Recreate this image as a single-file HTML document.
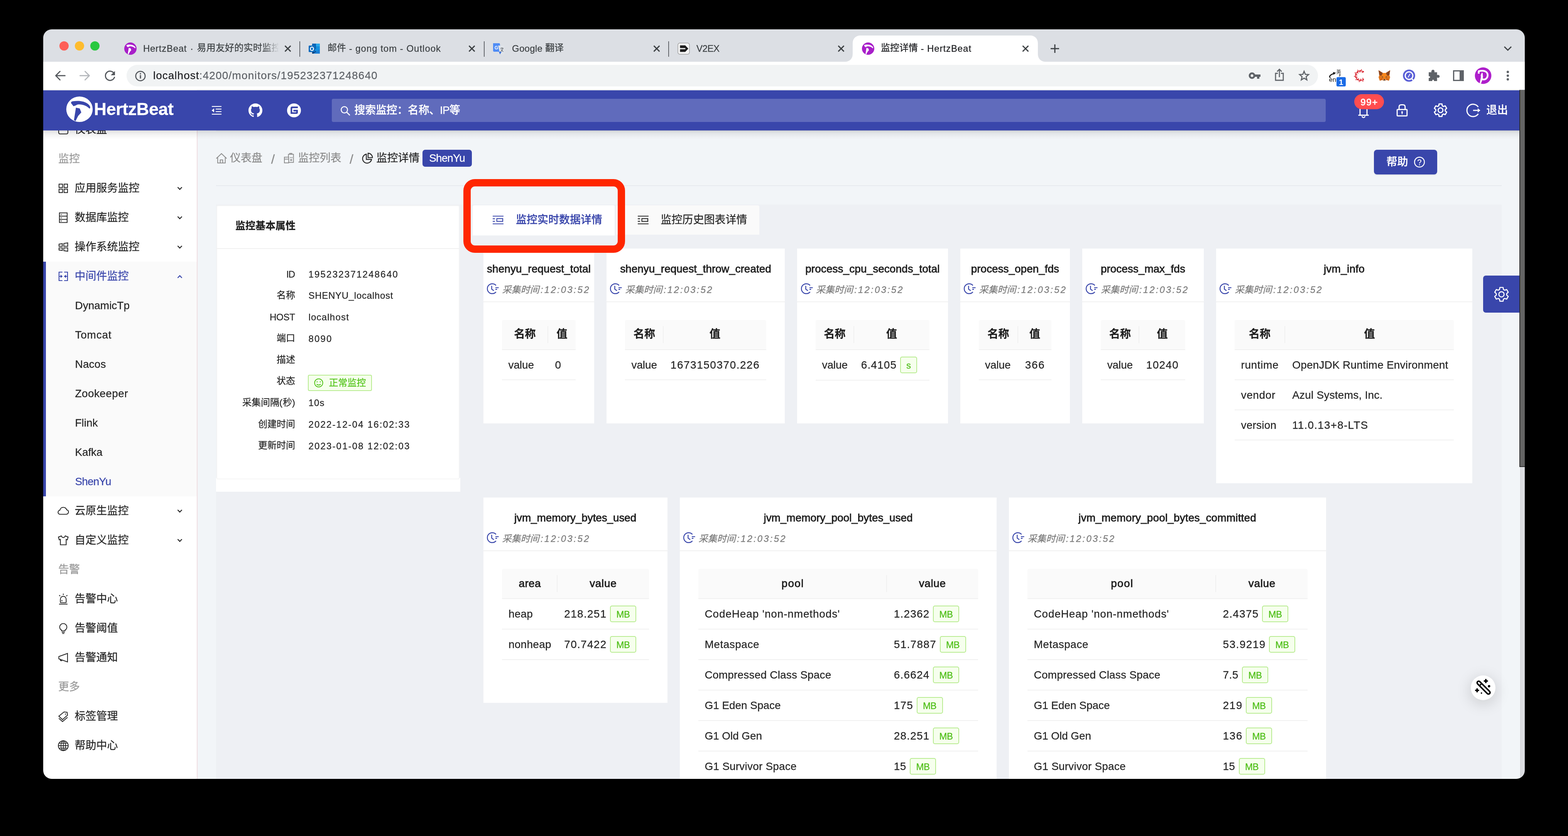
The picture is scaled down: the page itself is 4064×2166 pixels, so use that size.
<!DOCTYPE html>
<html lang="zh"><head><meta charset="utf-8"><title>监控详情 - HertzBeat</title><style>
*{box-sizing:border-box}
html,body{margin:0;padding:0}
html{width:4064px;height:2166px;overflow:hidden;background:#000}
body{width:4064px;height:2166px;background:#000;position:relative;overflow:hidden;font-family:"Liberation Sans","Noto Sans CJK SC",sans-serif}
#win{position:absolute;left:0;top:0;width:4064px;height:2166px;clip-path:inset(76px 112px 148px 112px round 22px);will-change:transform;overflow:hidden}
#win div,#win svg.ic{position:absolute}
.t{white-space:nowrap;-webkit-text-stroke:0.3px}
.t span{display:inline}
.t span.m{font-weight:500}
svg.ic{overflow:visible}
</style></head><body><div id="win"><div style="left:112.0px;top:76.0px;width:3840.0px;height:84.0px;background:#dcdfe4;"></div><div style="left:112.0px;top:160.0px;width:3840.0px;height:73.0px;background:#ffffff;"></div><div style="left:112.0px;top:231.5px;width:3840.0px;height:2.0px;background:#dcdde0;"></div><div style="left:154.0px;top:107.0px;width:24.0px;height:24.0px;background:#fe5f57;border-radius:50%;"></div><div style="left:194.0px;top:107.0px;width:24.0px;height:24.0px;background:#febc2e;border-radius:50%;"></div><div style="left:234.0px;top:107.0px;width:24.0px;height:24.0px;background:#28c840;border-radius:50%;"></div><svg class="ic" style="left:2190px;top:92px" width="520" height="68" viewBox="0 0 520 68"><path fill="#fff" d="M0 68 C12 68 20 60 20 48 V20 C20 8 28 0 40 0 H480 C492 0 500 8 500 20 V48 C500 60 508 68 520 68 Z"/></svg><div style="left:776.0px;top:107.0px;width:2.0px;height:40.0px;background:#5f6368;"></div><div style="left:1254.0px;top:107.0px;width:2.0px;height:40.0px;background:#5f6368;"></div><div style="left:1732.0px;top:107.0px;width:2.0px;height:40.0px;background:#5f6368;"></div><div class="t" style="top:102.0px;height:48px;line-height:48px;font-size:24px;color:#3c4043;left:371.0px;"><span style="letter-spacing:0.72px;margin-right:-0.72px">HertzBeat</span></div><div class="t" style="top:102.0px;height:48px;line-height:48px;font-size:24px;color:#3c4043;left:-3.0px;width:1000px;text-align:center;"><span>·</span></div><div class="t" style="top:102.0px;height:48px;line-height:48px;font-size:24px;color:#3c4043;left:510.5px;width:212px;overflow:hidden;-webkit-mask-image:linear-gradient(90deg,#000 170px,transparent 212px);"><span style="position:relative;top:-2px;letter-spacing:0.19px">易用友好的实时监控</span></div><div class="t" style="top:102.0px;height:48px;line-height:48px;font-size:24px;color:#3c4043;left:849.0px;"><span style="position:relative;top:-2px">邮件</span><span style="letter-spacing:0.98px;margin-right:-0.98px"> - gong tom - Outlook</span></div><div class="t" style="top:102.0px;height:48px;line-height:48px;font-size:24px;color:#3c4043;left:1327.0px;"><span style="letter-spacing:0.28px">Google </span><span style="position:relative;top:-2px">翻译</span></div><div class="t" style="top:102.0px;height:48px;line-height:48px;font-size:24px;color:#3c4043;left:1805.0px;"><span style="letter-spacing:-0.46px;margin-right:0.46px">V2EX</span></div><div class="t" style="top:102.0px;height:48px;line-height:48px;font-size:24px;color:#202124;left:2283.0px;"><span style="position:relative;top:-2px">监控详情</span><span style="letter-spacing:0.91px;margin-right:-0.91px"> - HertzBeat</span></div><svg class="ic" style="left:320.5px;top:108.5px;" width="34" height="34" viewBox="-17.0 -17.0 34 34"><g transform="scale(1.0)"><circle r="16" fill="#a81fc9"/><path fill="#fff" d="M-10.2 -7.6 C-10.4 -9.2 -9.4 -10 -7.6 -10.1 C-3 -10.6 1 -10.6 5 -9.4 C9 -8 12 -5.6 12.8 -3.4 C13.1 -2.6 13 -1.6 12.7 -1.1 L11.9 -0.9 C10.6 -2.4 9 -3.5 7.4 -4.3 C4.6 -5.6 1.6 -6.2 -1 -6.1 C-2.6 -6 -3.8 -5.4 -4.4 -4.8 L-7.2 -3.8 Z"/><path fill="#fff" d="M-4.3 -1.9 L0.3 -1 L2.2 4 L-1.6 8.4 L-4.8 14.9 L-6.7 13.6 Z"/></g></svg><svg class="ic" style="left:798.0px;top:109.5px;" width="34" height="32" viewBox="-17.0 -16.0 34 32"><rect x="-6" y="-13" width="20" height="22" rx="1.5" fill="#1490df"/><rect x="-6" y="-13" width="10" height="7" fill="#0364b8"/><rect x="4" y="-13" width="10" height="7" fill="#28a8ea"/><rect x="-6" y="-6" width="10" height="7" fill="#0a5ea8"/><rect x="4" y="-6" width="10" height="7" fill="#1490df"/><path fill="#0a3c78" d="M-6 1L14 13H-6Z"/><path fill="#1a7fd4" d="M14 1V13H-3Z"/><rect x="-15" y="-8" width="17" height="17" rx="1.8" fill="#0f6cbd"/><ellipse cx="-6.5" cy="0.5" rx="4" ry="4.6" fill="none" stroke="#fff" stroke-width="2.4"/></svg><svg class="ic" style="left:1276.0px;top:109.5px;" width="32" height="32" viewBox="-16.0 -16.0 32 32"><path fill="#4f8cf5" d="M-14 -14H3L8 8H-11C-13 8 -14 7 -14 5Z"/><path fill="#dfe3e8" d="M-1 -8H12C14 -8 15 -7 15 -5V12C15 14 14 15 12 15H4Z"/><path fill="#3a6fd8" d="M8 8L4 15L1 8Z"/><text x="-5.5" y="1.5" text-anchor="middle" font-family="Liberation Sans" font-weight="700" font-size="12" fill="#fff">G</text><path fill="none" stroke="#5f6368" stroke-width="1.3" d="M5 -1H13M9 -3V-1M11.5 -1C11 3 8 6 5.5 7.5M6.5 1.5C8 4.5 10 6.5 12.5 8"/></svg><svg class="ic" style="left:1755.0px;top:109.5px;" width="34" height="32" viewBox="-17.0 -16.0 34 32"><rect x="-15" y="-14.5" width="30" height="29" rx="5" fill="#f4f4f4" stroke="#9a9a9a" stroke-width="1.4"/><path fill="#1d1d1d" d="M-9.5 -8.5H4L12 0L4 8.5H-9.5V1.6H3.5L5 0L3.5 -1.6H-9.5Z"/></svg><svg class="ic" style="left:2233.0px;top:108.5px;" width="34" height="34" viewBox="-17.0 -17.0 34 34"><g transform="scale(1.0)"><circle r="16" fill="#a81fc9"/><path fill="#fff" d="M-10.2 -7.6 C-10.4 -9.2 -9.4 -10 -7.6 -10.1 C-3 -10.6 1 -10.6 5 -9.4 C9 -8 12 -5.6 12.8 -3.4 C13.1 -2.6 13 -1.6 12.7 -1.1 L11.9 -0.9 C10.6 -2.4 9 -3.5 7.4 -4.3 C4.6 -5.6 1.6 -6.2 -1 -6.1 C-2.6 -6 -3.8 -5.4 -4.4 -4.8 L-7.2 -3.8 Z"/><path fill="#fff" d="M-4.3 -1.9 L0.3 -1 L2.2 4 L-1.6 8.4 L-4.8 14.9 L-6.7 13.6 Z"/></g></svg><svg class="ic" style="left:734.0px;top:114.0px;" width="24" height="24" viewBox="-12.0 -12.0 24 24"><path fill="none" stroke="#3c4043" stroke-width="3" stroke-linecap="butt" stroke-linejoin="miter" d="M-7.4 -7.4L7.4 7.4M7.4 -7.4L-7.4 7.4"/></svg><svg class="ic" style="left:1211.0px;top:114.0px;" width="24" height="24" viewBox="-12.0 -12.0 24 24"><path fill="none" stroke="#3c4043" stroke-width="3" stroke-linecap="butt" stroke-linejoin="miter" d="M-7.4 -7.4L7.4 7.4M7.4 -7.4L-7.4 7.4"/></svg><svg class="ic" style="left:1689.5px;top:114.0px;" width="24" height="24" viewBox="-12.0 -12.0 24 24"><path fill="none" stroke="#3c4043" stroke-width="3" stroke-linecap="butt" stroke-linejoin="miter" d="M-7.4 -7.4L7.4 7.4M7.4 -7.4L-7.4 7.4"/></svg><svg class="ic" style="left:2168.0px;top:114.0px;" width="24" height="24" viewBox="-12.0 -12.0 24 24"><path fill="none" stroke="#3c4043" stroke-width="3" stroke-linecap="butt" stroke-linejoin="miter" d="M-7.4 -7.4L7.4 7.4M7.4 -7.4L-7.4 7.4"/></svg><svg class="ic" style="left:2645.5px;top:114.0px;" width="24" height="24" viewBox="-12.0 -12.0 24 24"><path fill="none" stroke="#3c4043" stroke-width="3" stroke-linecap="butt" stroke-linejoin="miter" d="M-7.4 -7.4L7.4 7.4M7.4 -7.4L-7.4 7.4"/></svg><svg class="ic" style="left:2719.0px;top:111.0px;" width="30" height="30" viewBox="-15.0 -15.0 30 30"><path fill="none" stroke="#3c4043" stroke-width="3" stroke-linecap="butt" stroke-linejoin="miter" d="M-11 0H11M0 -11V11"/></svg><svg class="ic" style="left:3892.5px;top:116.0px;" width="30" height="20" viewBox="-15.0 -10.0 30 20"><path fill="none" stroke="#3c4043" stroke-width="3" stroke-linecap="butt" stroke-linejoin="miter" d="M-9 -5L0 4L9 -5"/></svg><svg class="ic" style="left:139.0px;top:179.0px;" width="34" height="34" viewBox="-17.0 -17.0 34 34"><path fill="none" stroke="#54585d" stroke-width="3" stroke-linecap="round" stroke-linejoin="round" d="M12.5 0H-11.5M-0.5 -11L-11.5 0L-0.5 11"/></svg><svg class="ic" style="left:203.0px;top:179.0px;" width="34" height="34" viewBox="-17.0 -17.0 34 34"><path fill="none" stroke="#b4b7bb" stroke-width="3" stroke-linecap="round" stroke-linejoin="round" d="M-12.5 0H11.5M0.5 -11L11.5 0L0.5 11"/></svg><svg class="ic" style="left:266.5px;top:179.0px;" width="36" height="36" viewBox="-18.0 -18.0 36 36"><path fill="none" stroke="#54585d" stroke-width="3" stroke-linecap="butt" stroke-linejoin="miter" d="M10.5 -7 A12 12 0 1 0 12 2"/><path fill="#54585d" d="M13 -13V-2H2Z"/></svg><div style="left:328.0px;top:168.0px;width:3088.0px;height:56.0px;background:#f1f3f4;border-radius:28px;"></div><svg class="ic" style="left:348.0px;top:180.5px;" width="32" height="32" viewBox="-16.0 -16.0 32 32"><circle r="12.2" fill="none" stroke="#54585d" stroke-width="2.8" stroke-linecap="butt" stroke-linejoin="miter"/><rect x="-1.6" y="-2.5" width="3.2" height="9" fill="#54585d"/><rect x="-1.6" y="-7.6" width="3.2" height="3.2" fill="#54585d"/></svg><div class="t" style="top:168.0px;height:56px;line-height:56px;font-size:28px;color:#202124;left:397.0px;"><span style="letter-spacing:1.00px;margin-right:-1.00px">localhost</span></div><div class="t" style="top:168.0px;height:56px;line-height:56px;font-size:28px;color:#5f6368;left:516.5px;"><span style="letter-spacing:1.20px;margin-right:-1.20px">:4200/monitors/195232371248640</span></div><svg class="ic" style="left:3233.5px;top:184.0px;" width="36" height="24" viewBox="-18.0 -12.0 36 24"><circle cx="-7" cy="0" r="6" fill="none" stroke="#5f6368" stroke-width="5" stroke-linecap="butt" stroke-linejoin="miter"/><path fill="#5f6368" d="M-1 -3H15V3H12V8H6V3H-1Z"/></svg><svg class="ic" style="left:3300.5px;top:176.0px;" width="30" height="36" viewBox="-15.0 -18.0 30 36"><path fill="none" stroke="#5f6368" stroke-width="2.8" stroke-linecap="butt" stroke-linejoin="miter" d="M-4 -4H-10V14H10V-4H4M0 6V-14M-6 -8.5L0 -14.5L6 -8.5"/></svg><svg class="ic" style="left:3362.0px;top:177.0px;" width="36" height="36" viewBox="-18.0 -18.0 36 36"><polygon points="0.00,-10.30 3.23,-2.45 11.70,-1.80 5.23,3.70 7.23,11.95 0.00,7.50 -7.23,11.95 -5.23,3.70 -11.70,-1.80 -3.23,-2.45" fill="none" stroke="#5f6368" stroke-width="2.8" stroke-linecap="butt" stroke-linejoin="miter"/></svg><svg class="ic" style="left:3437.0px;top:166.0px;" width="56" height="60" viewBox="-28.0 -30.0 56 60"><text x="-20.2" y="15.7" font-family="Liberation Sans" font-size="16.5" fill="#111">en</text><path fill="none" stroke="#111" stroke-width="2.6" stroke-linecap="round" d="M-17.5 4.6C-19.5 3.4 -19.3 1.6 -17.6 0C-14.5 -3 -10 -5 -6.5 -6"/><path fill="#111" d="M-10.2 -9.6L-2.6 -7.6L-8.2 -2.2Z"/><text x="-1.4" y="-4.6" font-family="Liberation Sans, Noto Sans CJK SC, sans-serif" font-size="12.5" fill="#111">英</text><path fill="none" stroke="#111" stroke-width="1.5" d="M6 -3.2C9.5 -2.4 9 0.6 5.6 1.2"/><rect x="-1.1" y="3.8" width="24.1" height="24.1" rx="3.5" fill="#1a6be6"/><text x="10.9" y="24" text-anchor="middle" font-family="Liberation Sans" font-weight="700" font-size="20" fill="#fff">1</text></svg><svg class="ic" style="left:3507.5px;top:179.0px;" width="34" height="34" viewBox="-17.0 -17.0 34 34"><circle cx="8.2" cy="-10.2" r="2.0" fill="#d9232e"/><circle cx="5.5" cy="-8.4" r="1.3" fill="#d9232e"/><circle cx="4.7" cy="-11.9" r="1.4" fill="#d9232e"/><circle cx="3.8" cy="-15.3" r="1.3" fill="#d9232e"/><circle cx="0.8" cy="-12.5" r="2.0" fill="#d9232e"/><circle cx="-0.3" cy="-9.4" r="1.3" fill="#d9232e"/><circle cx="-3.0" cy="-11.8" r="1.4" fill="#d9232e"/><circle cx="-5.7" cy="-14.0" r="1.3" fill="#d9232e"/><circle cx="-6.4" cy="-10.1" r="2.0" fill="#d9232e"/><circle cx="-5.5" cy="-6.9" r="1.3" fill="#d9232e"/><circle cx="-9.1" cy="-7.3" r="1.4" fill="#d9232e"/><circle cx="-12.6" cy="-7.5" r="1.3" fill="#d9232e"/><circle cx="-10.9" cy="-3.8" r="2.0" fill="#d9232e"/><circle cx="-8.3" cy="-1.8" r="1.3" fill="#d9232e"/><circle cx="-11.5" cy="-0.0" r="1.4" fill="#d9232e"/><circle cx="-14.4" cy="1.9" r="1.3" fill="#d9232e"/><circle cx="-10.9" cy="3.8" r="2.0" fill="#d9232e"/><circle cx="-7.6" cy="4.0" r="1.3" fill="#d9232e"/><circle cx="-9.1" cy="7.3" r="1.4" fill="#d9232e"/><circle cx="-10.4" cy="10.5" r="1.3" fill="#d9232e"/><circle cx="-6.4" cy="10.1" r="2.0" fill="#d9232e"/><circle cx="-3.7" cy="8.3" r="1.3" fill="#d9232e"/><circle cx="-3.0" cy="11.8" r="1.4" fill="#d9232e"/><circle cx="-2.1" cy="15.2" r="1.3" fill="#d9232e"/><circle cx="0.8" cy="12.5" r="2.0" fill="#d9232e"/><circle cx="2.0" cy="9.4" r="1.3" fill="#d9232e"/><circle cx="4.7" cy="11.9" r="1.4" fill="#d9232e"/><circle cx="7.3" cy="14.2" r="1.3" fill="#d9232e"/><circle cx="8.2" cy="10.2" r="2.0" fill="#d9232e"/><circle cx="7.3" cy="7.1" r="1.3" fill="#d9232e"/><path fill="none" stroke="#d9232e" stroke-width="1.2" d="M8.2 -10.2A12.5 12.5 0 1 0 8.2 10.2"/></svg><svg class="ic" style="left:3571.0px;top:180.0px;" width="34" height="32" viewBox="-17.0 -16.0 34 32"><path fill="#e2761b" d="M-15 -14L-4 -7H4L15 -14L13 -1L15 4L12 13L5 11L2 14H-2L-5 11L-12 13L-15 4L-13 -1Z"/><path fill="#8a4520" d="M-15 -14L-4 -7L-7 0L-13 -1ZM15 -14L4 -7L7 0L13 -1Z"/><path fill="#f6851b" d="M-4 -7H4L7 0L4 6H-4L-7 0Z"/><path fill="#cd6116" d="M-12 13L-5 11L-6 5ZM12 13L5 11L6 5Z"/><path fill="#d7c1b3" d="M-4 8L-2 14H2L4 8L2 10H-2Z"/><path fill="#233447" d="M-7 2L-3 3L-4 5ZM7 2L3 3L4 5Z"/><path fill="#161616" d="M-2 10H2L1.5 12H-1.5Z"/></svg><svg class="ic" style="left:3634.0px;top:178.0px;" width="36" height="36" viewBox="-18.0 -18.0 36 36"><circle r="13.6" fill="none" stroke="#5a5fd7" stroke-width="4.4" stroke-linecap="butt" stroke-linejoin="miter"/><circle r="8.3" fill="#5a5fd7"/><path stroke="#fff" stroke-width="2" d="M-2.6 4.6L2.6 -4.6"/><path stroke="#fff" stroke-width="3" d="M6.8 7.6L13 14.4"/></svg><svg class="ic" style="left:3696.5px;top:178.0px;" width="38" height="36" viewBox="-19.0 -18.0 38 36"><g transform="scale(1.08)"><path fill="#5f6368" d="M-12 -8H-5.5C-7 -13.5 -1 -16 1.3 -12.5C2.2 -11 2 -9.5 1.5 -8H8V-1.5C13 -3.5 16 1.5 13 4.3C11.5 5.5 9.5 5.3 8 4.5V13H0.5C1.5 8.5 -4.5 8.5 -3.5 13H-12V5.5C-7.5 6.5 -7.5 0.5 -12 1.5Z"/></g></svg><svg class="ic" style="left:3765.0px;top:181.0px;" width="30" height="30" viewBox="-15.0 -15.0 30 30"><rect x="-12.4" y="-12.4" width="24.8" height="24.8" fill="none" stroke="#5f6368" stroke-width="3.2" stroke-linecap="butt" stroke-linejoin="miter"/><rect x="3" y="-12" width="10" height="24" fill="#5f6368"/></svg><svg class="ic" style="left:3820.9px;top:172.5px;" width="46" height="46" viewBox="-23.0 -23.0 46 46"><circle r="21.4" fill="#ae1fcb"/><path fill="none" stroke="#fff" stroke-width="4.4" stroke-linejoin="round" d="M-11.4 -5V-11.6C-6 -13 3 -13.6 8 -9.6C13.4 -5 13 4 7 8.4C3.6 10.6 0 10.4 -2.6 8.6"/><path fill="#fff" d="M-3.4 -7.6L-1.4 -7L-0.4 3L-1.6 10L-5.6 20.6L-8.8 19.6L-5.6 3.4L-6.2 -1Z"/></svg><svg class="ic" style="left:3902.5px;top:180.0px;" width="10" height="32" viewBox="-5.0 -16.0 10 32"><circle cy="-9.6" r="3.1" fill="#5f6368"/><circle cy="0" r="3.1" fill="#5f6368"/><circle cy="9.6" r="3.1" fill="#5f6368"/></svg><div style="left:112.0px;top:233.0px;width:3840.0px;height:1785.0px;background:#f2f5f8;"></div><div style="left:560.0px;top:530.0px;width:3332.0px;height:1488.0px;background:#eef0f4;"></div><div style="left:560.0px;top:479.5px;width:3332.0px;height:2.0px;background:#e6e9ee;"></div><div style="left:3940.0px;top:233.0px;width:12.0px;height:1785.0px;background:linear-gradient(90deg,#d2d3d7,#dcdde1 30%,#dcdde1 85%,#d4d5d9);"></div><div style="left:3938.0px;top:233.0px;width:14.0px;height:977.0px;background:#646464;border-left:2px solid #2b2b2b;border-bottom:2px solid #2b2b2b;"></div><div style="left:112.0px;top:233.0px;width:398.0px;height:1785.0px;background:#ffffff;"></div><div style="left:509.5px;top:338.0px;width:2.0px;height:1680.0px;background:#efdde1;"></div><div style="left:112.0px;top:678.0px;width:398.0px;height:608.0px;background:#fafafa;"></div><div style="left:112.0px;top:678.0px;width:6.5px;height:608.0px;background:#3946ab;"></div><svg class="ic" style="left:149.0px;top:322.0px;" width="30" height="28" viewBox="-15.0 -14.0 30 28"><path fill="none" stroke="#262626" stroke-width="2.1" stroke-linecap="butt" stroke-linejoin="miter" d="M-12 7V-4C-12 -8 -9 -11 -5 -11H5C9 -11 12 -8 12 -4V7C12 9.5 10.5 11 8 11H-8C-10.5 11 -12 9.5 -12 7Z"/></svg><div class="t" style="top:308.0px;height:56px;line-height:56px;font-size:28px;color:#262626;left:193.5px;"><span>仪表盘</span></div><div class="t" style="top:384.0px;height:56px;line-height:56px;font-size:28px;color:#999999;left:151.0px;"><span>监控</span></div><svg class="ic" style="left:150.0px;top:474.0px;" width="28" height="28" viewBox="-14.0 -14.0 28 28"><rect x="-11" y="-11" width="9" height="9" fill="none" stroke="#262626" stroke-width="2.1" stroke-linecap="butt" stroke-linejoin="miter"/><rect x="-11" y="2" width="9" height="9" fill="none" stroke="#262626" stroke-width="2.1" stroke-linecap="butt" stroke-linejoin="miter"/><rect x="2" y="-11" width="9" height="9" fill="none" stroke="#262626" stroke-width="2.1" stroke-linecap="butt" stroke-linejoin="miter"/><rect x="2" y="2" width="9" height="9" fill="none" stroke="#262626" stroke-width="2.1" stroke-linecap="butt" stroke-linejoin="miter"/></svg><div class="t" style="top:460.0px;height:56px;line-height:56px;font-size:28px;color:#262626;left:193.5px;"><span>应用服务监控</span></div><svg class="ic" style="left:456.5px;top:481.0px;" width="18" height="14" viewBox="-9.0 -7.0 18 14"><path fill="none" stroke="#262626" stroke-width="2.4" stroke-linecap="butt" stroke-linejoin="miter" d="M-5.5 -3L0 2.7L5.5 -3"/></svg><svg class="ic" style="left:151.0px;top:549.0px;" width="26" height="30" viewBox="-13.0 -15.0 26 30"><path fill="none" stroke="#262626" stroke-width="2.1" stroke-linecap="butt" stroke-linejoin="miter" d="M-10 -12.5H10V12.5H-10ZM-10 -4H10M-10 4.5H10"/><circle cx="-5.5" cy="-8.2" r="1.3" fill="#262626"/><circle cx="-5.5" cy="0.2" r="1.3" fill="#262626"/><circle cx="-5.5" cy="8.5" r="1.3" fill="#262626"/></svg><div class="t" style="top:536.0px;height:56px;line-height:56px;font-size:28px;color:#262626;left:193.5px;"><span>数据库监控</span></div><svg class="ic" style="left:456.5px;top:557.0px;" width="18" height="14" viewBox="-9.0 -7.0 18 14"><path fill="none" stroke="#262626" stroke-width="2.4" stroke-linecap="butt" stroke-linejoin="miter" d="M-5.5 -3L0 2.7L5.5 -3"/></svg><svg class="ic" style="left:150.0px;top:626.0px;" width="28" height="28" viewBox="-14.0 -14.0 28 28"><path fill="none" stroke="#262626" stroke-width="2.1" stroke-linecap="butt" stroke-linejoin="miter" d="M-11 -7.5L-2.5 -8.8V-1.8H-11ZM1.5 -9.3L11.5 -10.8V-1.8H1.5ZM-11 2.2H-2.5V9L-11 7.8ZM1.5 2.2H11.5V11L1.5 9.5Z"/></svg><div class="t" style="top:612.0px;height:56px;line-height:56px;font-size:28px;color:#262626;left:193.5px;"><span>操作系统监控</span></div><svg class="ic" style="left:456.5px;top:633.0px;" width="18" height="14" viewBox="-9.0 -7.0 18 14"><path fill="none" stroke="#262626" stroke-width="2.4" stroke-linecap="butt" stroke-linejoin="miter" d="M-5.5 -3L0 2.7L5.5 -3"/></svg><svg class="ic" style="left:150.0px;top:702.0px;" width="28" height="28" viewBox="-14.0 -14.0 28 28"><path fill="none" stroke="#3946ab" stroke-width="2.2" stroke-linecap="butt" stroke-linejoin="miter" d="M-2.2 -11H-11V11H-2.2M2.2 -11H11V11H2.2M-11 0H-6M11 0H6"/><path fill="#3946ab" d="M-1.6 0L-7 -4.2V4.2ZM1.6 0L7 -4.2V4.2Z"/></svg><div class="t" style="top:688.0px;height:56px;line-height:56px;font-size:28px;color:#3946ab;left:193.5px;"><span>中间件监控</span></div><svg class="ic" style="left:456.5px;top:710.0px;" width="18" height="14" viewBox="-9.0 -7.0 18 14"><path fill="none" stroke="#3946ab" stroke-width="2.4" stroke-linecap="butt" stroke-linejoin="miter" d="M-5.5 3L0 -2.7L5.5 3"/></svg><div class="t" style="top:764.0px;height:56px;line-height:56px;font-size:28px;color:#262626;left:194.5px;"><span style="letter-spacing:-0.01px;margin-right:0.01px">DynamicTp</span></div><div class="t" style="top:840.0px;height:56px;line-height:56px;font-size:28px;color:#262626;left:194.5px;"><span style="letter-spacing:0.75px;margin-right:-0.75px">Tomcat</span></div><div class="t" style="top:916.0px;height:56px;line-height:56px;font-size:28px;color:#262626;left:194.5px;"><span style="letter-spacing:0.16px;margin-right:-0.16px">Nacos</span></div><div class="t" style="top:992.0px;height:56px;line-height:56px;font-size:28px;color:#262626;left:194.5px;"><span style="letter-spacing:0.39px;margin-right:-0.39px">Zookeeper</span></div><div class="t" style="top:1068.0px;height:56px;line-height:56px;font-size:28px;color:#262626;left:194.5px;"><span style="letter-spacing:-0.03px;margin-right:0.03px">Flink</span></div><div class="t" style="top:1144.0px;height:56px;line-height:56px;font-size:28px;color:#262626;left:194.5px;"><span style="letter-spacing:-0.15px;margin-right:0.15px">Kafka</span></div><div class="t" style="top:1220.0px;height:56px;line-height:56px;font-size:28px;color:#3946ab;left:194.5px;"><span style="letter-spacing:-0.82px;margin-right:0.82px">ShenYu</span></div><svg class="ic" style="left:148.0px;top:1312.0px;" width="32" height="24" viewBox="-16.0 -12.0 32 24"><path fill="none" stroke="#262626" stroke-width="2.2" stroke-linecap="butt" stroke-linejoin="round" d="M-7.5 8.5C-11.5 8.5 -13.5 6 -13.5 3.2C-13.5 0.5 -11.5 -1.8 -8.8 -2.2C-8 -6.5 -4.5 -9.5 0 -9.5C4.2 -9.5 7.6 -7 8.8 -3C11.6 -2.6 13.5 -0.2 13.5 2.6C13.5 5.8 11 8.5 7.5 8.5Z"/></svg><div class="t" style="top:1296.0px;height:56px;line-height:56px;font-size:28px;color:#262626;left:193.5px;"><span>云原生监控</span></div><svg class="ic" style="left:456.5px;top:1317.0px;" width="18" height="14" viewBox="-9.0 -7.0 18 14"><path fill="none" stroke="#262626" stroke-width="2.4" stroke-linecap="butt" stroke-linejoin="miter" d="M-5.5 -3L0 2.7L5.5 -3"/></svg><svg class="ic" style="left:149.0px;top:1386.0px;" width="30" height="28" viewBox="-15.0 -14.0 30 28"><path fill="none" stroke="#262626" stroke-width="2.2" stroke-linecap="butt" stroke-linejoin="miter" d="M-5 -11.5L-12.5 -8.5L-10.5 -1.5L-7.5 -2.5V11.5H7.5V-2.5L10.5 -1.5L12.5 -8.5L5 -11.5C4 -8.5 2.2 -7.2 0 -7.2C-2.2 -7.2 -4 -8.5 -5 -11.5Z"/></svg><div class="t" style="top:1372.0px;height:56px;line-height:56px;font-size:28px;color:#262626;left:193.5px;"><span>自定义监控</span></div><svg class="ic" style="left:456.5px;top:1393.0px;" width="18" height="14" viewBox="-9.0 -7.0 18 14"><path fill="none" stroke="#262626" stroke-width="2.4" stroke-linecap="butt" stroke-linejoin="miter" d="M-5.5 -3L0 2.7L5.5 -3"/></svg><div class="t" style="top:1448.0px;height:56px;line-height:56px;font-size:28px;color:#999999;left:151.0px;"><span>告警</span></div><svg class="ic" style="left:150.0px;top:1536.0px;" width="28" height="32" viewBox="-14.0 -16.0 28 32"><path fill="none" stroke="#262626" stroke-width="2.1" stroke-linecap="butt" stroke-linejoin="miter" d="M-7.5 9.5V1C-7.5 -4 -4.2 -7 0 -7C4.2 -7 7.5 -4 7.5 1V9.5M-11 13.2H11M-7.5 9.5H7.5M0 -10.5V-14M-8 -7.6L-10.5 -10M8 -7.6L10.5 -10M-3.5 2.5V6"/></svg><div class="t" style="top:1524.0px;height:56px;line-height:56px;font-size:28px;color:#262626;left:193.5px;"><span>告警中心</span></div><svg class="ic" style="left:151.0px;top:1612.0px;" width="26" height="32" viewBox="-13.0 -16.0 26 32"><path fill="none" stroke="#262626" stroke-width="2.1" stroke-linecap="butt" stroke-linejoin="miter" d="M-4.5 6.5V4.5C-7.5 2.8 -9.3 0 -9.3 -3.3C-9.3 -8.5 -5.2 -12.5 0 -12.5C5.2 -12.5 9.3 -8.5 9.3 -3.3C9.3 0 7.5 2.8 4.5 4.5V6.5ZM-4 10H4M-2.8 13.3H2.8"/></svg><div class="t" style="top:1600.0px;height:56px;line-height:56px;font-size:28px;color:#262626;left:193.5px;"><span>告警阈值</span></div><svg class="ic" style="left:149.0px;top:1690.0px;" width="30" height="28" viewBox="-15.0 -14.0 30 28"><path fill="none" stroke="#262626" stroke-width="2.1" stroke-linecap="butt" stroke-linejoin="miter" d="M11 -11L-11.5 -3V3L11 11ZM-8 4.2C-8.5 7.5 -5 9.5 -2.8 6.2"/></svg><div class="t" style="top:1676.0px;height:56px;line-height:56px;font-size:28px;color:#262626;left:193.5px;"><span>告警通知</span></div><div class="t" style="top:1752.0px;height:56px;line-height:56px;font-size:28px;color:#999999;left:151.0px;"><span>更多</span></div><svg class="ic" style="left:149.0px;top:1840.0px;" width="30" height="32" viewBox="-15.0 -16.0 30 32"><path fill="none" stroke="#262626" stroke-width="2.1" stroke-linecap="butt" stroke-linejoin="miter" d="M-11.5 -0.5L2 -11.5L10 -10.5L11 -3L-2 8.5ZM-11.5 5L-2 13.5L11 2.5"/><circle cx="5.8" cy="-6" r="1.5" fill="#262626"/></svg><div class="t" style="top:1828.0px;height:56px;line-height:56px;font-size:28px;color:#262626;left:193.5px;"><span>标签管理</span></div><svg class="ic" style="left:148.0px;top:1916.0px;" width="32" height="32" viewBox="-16.0 -16.0 32 32"><circle r="12.8" fill="none" stroke="#262626" stroke-width="2.1" stroke-linecap="butt" stroke-linejoin="miter"/><ellipse rx="6" ry="12.8" fill="none" stroke="#262626" stroke-width="1.9" stroke-linecap="butt" stroke-linejoin="miter"/><path fill="none" stroke="#262626" stroke-width="1.9" stroke-linecap="butt" stroke-linejoin="miter" d="M0 -12.8V12.8M-12.8 0H12.8M-11 -6.4H11M-11 6.4H11"/></svg><div class="t" style="top:1904.0px;height:56px;line-height:56px;font-size:28px;color:#262626;left:193.5px;"><span>帮助中心</span></div><svg class="ic" style="left:558.2px;top:394.8px;" width="32" height="30" viewBox="-16.0 -15.0 32 30"><path fill="none" stroke="#8c8c8c" stroke-width="2.1" stroke-linecap="butt" stroke-linejoin="miter" d="M-13.5 0.8L0 -12L13.5 0.8M-9.8 -2V12.2H9.8V-2M-3.2 12.2V4.2H3.2V12.2"/></svg><div class="t" style="top:382.0px;height:56px;line-height:56px;font-size:28px;color:#8c8c8c;left:596.0px;"><span>仪表盘</span></div><div class="t" style="top:378.0px;height:68px;line-height:68px;font-size:34px;color:#8c8c8c;left:207.5px;width:1000px;text-align:center;"><span>/</span></div><svg class="ic" style="left:733.6px;top:395.0px;" width="30" height="30" viewBox="-15.0 -15.0 30 30"><path fill="none" stroke="#8c8c8c" stroke-width="2.0" stroke-linecap="butt" stroke-linejoin="miter" d="M-1.4 -2.7V-10.2H11.6V10.7H-0.7M1.8 -10.2V-12.6H7.6V-10.2M-11.9 -2.7H-0.7V12H-11.9ZM-11.9 2.2H-0.7"/><circle cx="5.6" cy="4.6" r="1.8" fill="none" stroke="#8c8c8c" stroke-width="1.7" stroke-linecap="butt" stroke-linejoin="miter"/><circle cx="4.2" cy="-1.6" r="1.3" fill="#8c8c8c"/><circle cx="7.9" cy="-1.6" r="1.3" fill="#8c8c8c"/></svg><div class="t" style="top:382.0px;height:56px;line-height:56px;font-size:28px;color:#8c8c8c;left:772.5px;"><span>监控列表</span></div><div class="t" style="top:378.0px;height:68px;line-height:68px;font-size:34px;color:#8c8c8c;left:411.0px;width:1000px;text-align:center;"><span>/</span></div><svg class="ic" style="left:936.4px;top:394.0px;" width="32" height="32" viewBox="-16.0 -16.0 32 32"><path fill="none" stroke="#262626" stroke-width="2.3" stroke-linecap="butt" stroke-linejoin="miter" d="M-2.5 -10.5A11.7 11.7 0 1 0 11 3H-2.5Z"/><path fill="none" stroke="#262626" stroke-width="2.3" stroke-linecap="butt" stroke-linejoin="miter" d="M2 -13A11.3 11.3 0 0 1 13.3 -1.6H2Z"/></svg><div class="t" style="top:382.0px;height:56px;line-height:56px;font-size:28px;color:#262626;left:975.5px;"><span>监控详情</span></div><div style="left:1094.8px;top:388.0px;width:128.2px;height:43.7px;background:#3946ab;border-radius:7px;"></div><div class="t" style="top:382.0px;height:56px;line-height:56px;font-size:28px;color:#fff;left:659.0px;width:1000px;text-align:center;"><span style="letter-spacing:-0.92px;margin-right:0.92px">ShenYu</span></div><div style="left:3560.6px;top:388.0px;width:164.4px;height:64.0px;background:#3946ab;border-radius:8px;box-shadow:0 3px 1px rgba(0,0,0,.05);"></div><div class="t" style="top:391.8px;height:56px;line-height:56px;font-size:28px;color:#fff;left:3593.5px;"><span class="m">帮助</span></div><svg class="ic" style="left:3662.9px;top:404.1px;" width="32" height="32" viewBox="-16.0 -16.0 32 32"><circle r="12.8" fill="none" stroke="#fff" stroke-width="2.4" stroke-linecap="butt" stroke-linejoin="miter"/><path fill="none" stroke="#fff" stroke-width="2.1" stroke-linecap="butt" stroke-linejoin="miter" d="M-4 -2.4C-4 -4.8 -2.3 -6 0 -6C2.3 -6 4 -4.8 4 -2.8C4 -0.2 0 -0.2 0 3.4"/><circle cy="6.9" r="1.4" fill="#fff"/></svg><div style="left:560.3px;top:1238.0px;width:632.7px;height:35.7px;background:#ffffff;"></div><div style="left:561.3px;top:532.0px;width:629.7px;height:709.5px;background:#ffffff;border:2px solid #f5f5f5;border-radius:4px;"></div><div style="left:561.3px;top:643.0px;width:629.7px;height:2.0px;background:#f0f0f0;"></div><div class="t" style="top:558.5px;height:52px;line-height:52px;font-size:26px;color:#1f1f1f;font-weight:700;left:610.0px;"><span>监控基本属性</span></div><div class="t" style="top:686.5px;height:48px;line-height:48px;font-size:24px;color:#262626;left:-235.0px;width:1000px;text-align:right;"><span style="letter-spacing:-1.00px;margin-right:1.00px">ID</span></div><div class="t" style="top:686.5px;height:48px;line-height:48px;font-size:24px;color:#262626;left:799.4px;"><span style="letter-spacing:2.23px;margin-right:-2.23px">195232371248640</span></div><div class="t" style="top:740.6px;height:48px;line-height:48px;font-size:24px;color:#262626;left:-235.0px;width:1000px;text-align:right;"><span>名称</span></div><div class="t" style="top:742.1px;height:48px;line-height:48px;font-size:24px;color:#262626;left:799.4px;"><span style="letter-spacing:0.73px;margin-right:-0.73px">SHENYU_localhost</span></div><div class="t" style="top:797.8px;height:48px;line-height:48px;font-size:24px;color:#262626;left:-235.0px;width:1000px;text-align:right;"><span style="letter-spacing:-0.22px;margin-right:0.22px">HOST</span></div><div class="t" style="top:797.8px;height:48px;line-height:48px;font-size:24px;color:#262626;left:799.4px;"><span style="letter-spacing:1.22px;margin-right:-1.22px">localhost</span></div><div class="t" style="top:852.0px;height:48px;line-height:48px;font-size:24px;color:#262626;left:-235.0px;width:1000px;text-align:right;"><span>端口</span></div><div class="t" style="top:853.5px;height:48px;line-height:48px;font-size:24px;color:#262626;left:799.4px;"><span style="letter-spacing:2.20px;margin-right:-2.20px">8090</span></div><div class="t" style="top:907.6px;height:48px;line-height:48px;font-size:24px;color:#262626;left:-235.0px;width:1000px;text-align:right;"><span>描述</span></div><div class="t" style="top:963.2px;height:48px;line-height:48px;font-size:24px;color:#262626;left:-235.0px;width:1000px;text-align:right;"><span>状态</span></div><div style="left:798.4px;top:970.5px;width:165.6px;height:42.7px;background:#f6ffed;border:2px solid #b7eb8f;border-radius:4px;"></div><svg class="ic" style="left:812.0px;top:977.5px;" width="28" height="28" viewBox="-14.0 -14.0 28 28"><circle r="10.6" fill="none" stroke="#52c41a" stroke-width="2" stroke-linecap="butt" stroke-linejoin="miter"/><circle cx="-4.2" cy="-2.6" r="1.4" fill="#52c41a"/><circle cx="4.2" cy="-2.6" r="1.4" fill="#52c41a"/><path fill="none" stroke="#52c41a" stroke-width="2" stroke-linecap="butt" stroke-linejoin="miter" d="M-5 2.8C-3.6 6.4 3.6 6.4 5 2.8"/></svg><div class="t" style="top:967.5px;height:48px;line-height:48px;font-size:24px;color:#52c41a;left:852.5px;"><span>正常监控</span></div><div class="t" style="top:1018.9px;height:48px;line-height:48px;font-size:24px;color:#262626;left:-235.0px;width:1000px;text-align:right;"><span>采集间隔</span><span style="letter-spacing:1.01px">(</span><span>秒</span><span style="letter-spacing:1.01px;margin-right:-1.01px">)</span></div><div class="t" style="top:1020.4px;height:48px;line-height:48px;font-size:24px;color:#262626;left:799.4px;"><span style="letter-spacing:1.15px;margin-right:-1.15px">10s</span></div><div class="t" style="top:1074.5px;height:48px;line-height:48px;font-size:24px;color:#262626;left:-235.0px;width:1000px;text-align:right;"><span>创建时间</span></div><div class="t" style="top:1076.0px;height:48px;line-height:48px;font-size:24px;color:#262626;left:799.4px;"><span style="letter-spacing:2.17px;margin-right:-2.17px">2022-12-04 16:02:33</span></div><div class="t" style="top:1130.2px;height:48px;line-height:48px;font-size:24px;color:#262626;left:-235.0px;width:1000px;text-align:right;"><span>更新时间</span></div><div class="t" style="top:1131.7px;height:48px;line-height:48px;font-size:24px;color:#262626;left:799.4px;"><span style="letter-spacing:2.17px;margin-right:-2.17px">2023-01-08 12:02:03</span></div><div style="left:1224.5px;top:531.8px;width:368.5px;height:78.0px;background:#ffffff;border-radius:4px 4px 0 0;"></div><div style="left:1597.0px;top:531.8px;width:371.3px;height:76.2px;background:#fafafa;border-radius:4px 4px 0 0;"></div><svg class="ic" style="left:1274.7px;top:557.0px;" width="32" height="26" viewBox="-16.0 -13.0 32 26"><path fill="none" stroke="#3946ab" stroke-width="2.2" stroke-linecap="butt" stroke-linejoin="miter" d="M-14 -10H14M-14 10H14M-14 -3.2H-8M-14 3.4H-8"/><rect x="-3.4" y="-3.6" width="15.4" height="7.2" fill="none" stroke="#3946ab" stroke-width="2.2" stroke-linecap="butt" stroke-linejoin="miter"/></svg><div class="t" style="top:542.0px;height:56px;line-height:56px;font-size:28px;color:#3946ab;left:1337.0px;"><span class="m">监控实时数据详情</span></div><svg class="ic" style="left:1650.5px;top:557.0px;" width="32" height="26" viewBox="-16.0 -13.0 32 26"><path fill="none" stroke="#262626" stroke-width="2.2" stroke-linecap="butt" stroke-linejoin="miter" d="M-14 -10H14M-14 10H14M-14 -3.2H-8M-14 3.4H-8"/><rect x="-3.4" y="-3.6" width="15.4" height="7.2" fill="none" stroke="#262626" stroke-width="2.2" stroke-linecap="butt" stroke-linejoin="miter"/></svg><div class="t" style="top:542.0px;height:56px;line-height:56px;font-size:28px;color:#262626;left:1712.5px;"><span>监控历史图表详情</span></div><div style="left:1253.0px;top:644.0px;width:287.0px;height:452.6px;background:#ffffff;"></div><div class="t" style="top:668.5px;height:56px;line-height:56px;font-size:28px;color:#1f1f1f;-webkit-text-stroke:0.9px;left:896.5px;width:1000px;text-align:center;"><span style="letter-spacing:0.07px;margin-right:-0.07px">shenyu_request_total</span></div><svg class="ic" style="left:1258.3px;top:732.0px;" width="36" height="32" viewBox="-18.0 -16.0 36 32"><path fill="none" stroke="#3946ab" stroke-width="2.4" stroke-linecap="butt" stroke-linejoin="miter" d="M9.6 -8.4A12.8 12.8 0 1 0 9.6 8.4"/><path fill="none" stroke="#3946ab" stroke-width="2.4" stroke-linecap="butt" stroke-linejoin="miter" d="M-1.6 -7.4V1.2L4 5.2M8 -2.6H16.6M8 1.8H12.4"/></svg><div class="t" style="top:727.0px;height:48px;line-height:48px;font-size:24px;color:#7a7a7a;font-style:italic;left:1301.5px;"><span>采集时间</span></div><div class="t" style="top:727.0px;height:48px;line-height:48px;font-size:24px;color:#7a7a7a;font-style:italic;left:1401.0px;"><span style="letter-spacing:3.18px;margin-right:-3.18px">:12:03:52</span></div><div style="left:1253.0px;top:781.0px;width:287.0px;height:2.0px;background:#f0f0f0;"></div><div style="left:1301.0px;top:828.5px;width:190.6px;height:77.5px;background:#fafafa;border-radius:4px 4px 0 0;"></div><div style="left:1301.0px;top:905.0px;width:190.6px;height:2.0px;background:#f0f0f0;"></div><div style="left:1418.7px;top:844.5px;width:2.0px;height:44.5px;background:#f0f0f0;"></div><div class="t" style="top:837.8px;height:56px;line-height:56px;font-size:28px;color:#1f1f1f;-webkit-text-stroke:0.9px;left:860.6px;width:1000px;text-align:center;"><span class="m">名称</span></div><div class="t" style="top:837.8px;height:56px;line-height:56px;font-size:28px;color:#1f1f1f;-webkit-text-stroke:0.9px;left:956.4px;width:1000px;text-align:center;"><span class="m">值</span></div><div class="t" style="top:917.5px;height:56px;line-height:56px;font-size:28px;color:#262626;left:1317.5px;"><span style="letter-spacing:-0.11px;margin-right:0.11px">value</span></div><div class="t" style="top:917.5px;height:56px;line-height:56px;font-size:28px;color:#262626;left:1438.5px;"><span style="letter-spacing:-0.27px;margin-right:0.27px">0</span></div><div style="left:1301.0px;top:983.0px;width:190.6px;height:2.0px;background:#f0f0f0;"></div><div style="left:1572.0px;top:644.0px;width:462.0px;height:452.6px;background:#ffffff;"></div><div class="t" style="top:668.5px;height:56px;line-height:56px;font-size:28px;color:#1f1f1f;-webkit-text-stroke:0.9px;left:1303.0px;width:1000px;text-align:center;"><span style="letter-spacing:-0.02px;margin-right:0.02px">shenyu_request_throw_created</span></div><svg class="ic" style="left:1577.3px;top:732.0px;" width="36" height="32" viewBox="-18.0 -16.0 36 32"><path fill="none" stroke="#3946ab" stroke-width="2.4" stroke-linecap="butt" stroke-linejoin="miter" d="M9.6 -8.4A12.8 12.8 0 1 0 9.6 8.4"/><path fill="none" stroke="#3946ab" stroke-width="2.4" stroke-linecap="butt" stroke-linejoin="miter" d="M-1.6 -7.4V1.2L4 5.2M8 -2.6H16.6M8 1.8H12.4"/></svg><div class="t" style="top:727.0px;height:48px;line-height:48px;font-size:24px;color:#7a7a7a;font-style:italic;left:1620.5px;"><span>采集时间</span></div><div class="t" style="top:727.0px;height:48px;line-height:48px;font-size:24px;color:#7a7a7a;font-style:italic;left:1720.0px;"><span style="letter-spacing:3.18px;margin-right:-3.18px">:12:03:52</span></div><div style="left:1572.0px;top:781.0px;width:462.0px;height:2.0px;background:#f0f0f0;"></div><div style="left:1620.0px;top:828.5px;width:365.6px;height:77.5px;background:#fafafa;border-radius:4px 4px 0 0;"></div><div style="left:1620.0px;top:905.0px;width:365.6px;height:2.0px;background:#f0f0f0;"></div><div style="left:1718.0px;top:844.5px;width:2.0px;height:44.5px;background:#f0f0f0;"></div><div class="t" style="top:837.8px;height:56px;line-height:56px;font-size:28px;color:#1f1f1f;-webkit-text-stroke:0.9px;left:1170.0px;width:1000px;text-align:center;"><span class="m">名称</span></div><div class="t" style="top:837.8px;height:56px;line-height:56px;font-size:28px;color:#1f1f1f;-webkit-text-stroke:0.9px;left:1353.0px;width:1000px;text-align:center;"><span class="m">值</span></div><div class="t" style="top:917.5px;height:56px;line-height:56px;font-size:28px;color:#262626;left:1636.5px;"><span style="letter-spacing:-0.11px;margin-right:0.11px">value</span></div><div class="t" style="top:917.5px;height:56px;line-height:56px;font-size:28px;color:#262626;left:1737.8px;"><span style="letter-spacing:1.52px;margin-right:-1.52px">1673150370.226</span></div><div style="left:1620.0px;top:983.0px;width:365.6px;height:2.0px;background:#f0f0f0;"></div><div style="left:2066.2px;top:644.0px;width:390.5px;height:452.6px;background:#ffffff;"></div><div class="t" style="top:668.5px;height:56px;line-height:56px;font-size:28px;color:#1f1f1f;-webkit-text-stroke:0.9px;left:1761.4px;width:1000px;text-align:center;"><span style="letter-spacing:0.05px;margin-right:-0.05px">process_cpu_seconds_total</span></div><svg class="ic" style="left:2071.5px;top:732.0px;" width="36" height="32" viewBox="-18.0 -16.0 36 32"><path fill="none" stroke="#3946ab" stroke-width="2.4" stroke-linecap="butt" stroke-linejoin="miter" d="M9.6 -8.4A12.8 12.8 0 1 0 9.6 8.4"/><path fill="none" stroke="#3946ab" stroke-width="2.4" stroke-linecap="butt" stroke-linejoin="miter" d="M-1.6 -7.4V1.2L4 5.2M8 -2.6H16.6M8 1.8H12.4"/></svg><div class="t" style="top:727.0px;height:48px;line-height:48px;font-size:24px;color:#7a7a7a;font-style:italic;left:2114.7px;"><span>采集时间</span></div><div class="t" style="top:727.0px;height:48px;line-height:48px;font-size:24px;color:#7a7a7a;font-style:italic;left:2214.2px;"><span style="letter-spacing:3.18px;margin-right:-3.18px">:12:03:52</span></div><div style="left:2066.2px;top:781.0px;width:390.5px;height:2.0px;background:#f0f0f0;"></div><div style="left:2114.0px;top:828.5px;width:294.8px;height:77.5px;background:#fafafa;border-radius:4px 4px 0 0;"></div><div style="left:2114.0px;top:905.0px;width:294.8px;height:2.0px;background:#f0f0f0;"></div><div style="left:2212.0px;top:844.5px;width:2.0px;height:44.5px;background:#f0f0f0;"></div><div class="t" style="top:837.8px;height:56px;line-height:56px;font-size:28px;color:#1f1f1f;-webkit-text-stroke:0.9px;left:1663.5px;width:1000px;text-align:center;"><span class="m">名称</span></div><div class="t" style="top:837.8px;height:56px;line-height:56px;font-size:28px;color:#1f1f1f;-webkit-text-stroke:0.9px;left:1811.0px;width:1000px;text-align:center;"><span class="m">值</span></div><div class="t" style="top:918.0px;height:56px;line-height:56px;font-size:28px;color:#262626;left:2130.5px;"><span style="letter-spacing:-0.11px;margin-right:0.11px">value</span></div><div class="t" style="top:918.0px;height:56px;line-height:56px;font-size:28px;color:#262626;left:2231.8px;"><span style="letter-spacing:1.11px;margin-right:-1.11px">6.4105</span></div><div style="left:2332.7px;top:923.7px;width:44.4px;height:43.8px;background:#f6ffed;border:2px solid #b7eb8f;border-radius:5px;"></div><div class="t" style="top:922.5px;height:48px;line-height:48px;font-size:24px;color:#4fbf18;left:1854.9px;width:1000px;text-align:center;-webkit-text-stroke:0.35px;"><span>s</span></div><div style="left:2114.0px;top:984.0px;width:294.8px;height:2.0px;background:#f0f0f0;"></div><div style="left:2488.7px;top:644.0px;width:284.5px;height:452.6px;background:#ffffff;"></div><div class="t" style="top:668.5px;height:56px;line-height:56px;font-size:28px;color:#1f1f1f;-webkit-text-stroke:0.9px;left:2130.9px;width:1000px;text-align:center;"><span style="letter-spacing:-0.04px;margin-right:0.04px">process_open_fds</span></div><svg class="ic" style="left:2494.0px;top:732.0px;" width="36" height="32" viewBox="-18.0 -16.0 36 32"><path fill="none" stroke="#3946ab" stroke-width="2.4" stroke-linecap="butt" stroke-linejoin="miter" d="M9.6 -8.4A12.8 12.8 0 1 0 9.6 8.4"/><path fill="none" stroke="#3946ab" stroke-width="2.4" stroke-linecap="butt" stroke-linejoin="miter" d="M-1.6 -7.4V1.2L4 5.2M8 -2.6H16.6M8 1.8H12.4"/></svg><div class="t" style="top:727.0px;height:48px;line-height:48px;font-size:24px;color:#7a7a7a;font-style:italic;left:2537.2px;"><span>采集时间</span></div><div class="t" style="top:727.0px;height:48px;line-height:48px;font-size:24px;color:#7a7a7a;font-style:italic;left:2636.7px;"><span style="letter-spacing:3.18px;margin-right:-3.18px">:12:03:52</span></div><div style="left:2488.7px;top:781.0px;width:284.5px;height:2.0px;background:#f0f0f0;"></div><div style="left:2536.6px;top:828.5px;width:188.1px;height:77.5px;background:#fafafa;border-radius:4px 4px 0 0;"></div><div style="left:2536.6px;top:905.0px;width:188.1px;height:2.0px;background:#f0f0f0;"></div><div style="left:2637.0px;top:844.5px;width:2.0px;height:44.5px;background:#f0f0f0;"></div><div class="t" style="top:837.8px;height:56px;line-height:56px;font-size:28px;color:#1f1f1f;-webkit-text-stroke:0.9px;left:2087.6px;width:1000px;text-align:center;"><span class="m">名称</span></div><div class="t" style="top:837.8px;height:56px;line-height:56px;font-size:28px;color:#1f1f1f;-webkit-text-stroke:0.9px;left:2182.0px;width:1000px;text-align:center;"><span class="m">值</span></div><div class="t" style="top:917.5px;height:56px;line-height:56px;font-size:28px;color:#262626;left:2553.1px;"><span style="letter-spacing:-0.11px;margin-right:0.11px">value</span></div><div class="t" style="top:917.5px;height:56px;line-height:56px;font-size:28px;color:#262626;left:2656.8px;"><span style="letter-spacing:1.64px;margin-right:-1.64px">366</span></div><div style="left:2536.6px;top:983.0px;width:188.1px;height:2.0px;background:#f0f0f0;"></div><div style="left:2804.8px;top:644.0px;width:315.1px;height:452.6px;background:#ffffff;"></div><div class="t" style="top:668.5px;height:56px;line-height:56px;font-size:28px;color:#1f1f1f;-webkit-text-stroke:0.9px;left:2462.4px;width:1000px;text-align:center;"><span style="letter-spacing:-0.03px;margin-right:0.03px">process_max_fds</span></div><svg class="ic" style="left:2810.1px;top:732.0px;" width="36" height="32" viewBox="-18.0 -16.0 36 32"><path fill="none" stroke="#3946ab" stroke-width="2.4" stroke-linecap="butt" stroke-linejoin="miter" d="M9.6 -8.4A12.8 12.8 0 1 0 9.6 8.4"/><path fill="none" stroke="#3946ab" stroke-width="2.4" stroke-linecap="butt" stroke-linejoin="miter" d="M-1.6 -7.4V1.2L4 5.2M8 -2.6H16.6M8 1.8H12.4"/></svg><div class="t" style="top:727.0px;height:48px;line-height:48px;font-size:24px;color:#7a7a7a;font-style:italic;left:2853.3px;"><span>采集时间</span></div><div class="t" style="top:727.0px;height:48px;line-height:48px;font-size:24px;color:#7a7a7a;font-style:italic;left:2952.8px;"><span style="letter-spacing:3.18px;margin-right:-3.18px">:12:03:52</span></div><div style="left:2804.8px;top:781.0px;width:315.1px;height:2.0px;background:#f0f0f0;"></div><div style="left:2853.2px;top:828.5px;width:218.8px;height:77.5px;background:#fafafa;border-radius:4px 4px 0 0;"></div><div style="left:2853.2px;top:905.0px;width:218.8px;height:2.0px;background:#f0f0f0;"></div><div style="left:2951.0px;top:844.5px;width:2.0px;height:44.5px;background:#f0f0f0;"></div><div class="t" style="top:837.8px;height:56px;line-height:56px;font-size:28px;color:#1f1f1f;-webkit-text-stroke:0.9px;left:2403.0px;width:1000px;text-align:center;"><span class="m">名称</span></div><div class="t" style="top:837.8px;height:56px;line-height:56px;font-size:28px;color:#1f1f1f;-webkit-text-stroke:0.9px;left:2512.5px;width:1000px;text-align:center;"><span class="m">值</span></div><div class="t" style="top:917.5px;height:56px;line-height:56px;font-size:28px;color:#262626;left:2869.7px;"><span style="letter-spacing:-0.11px;margin-right:0.11px">value</span></div><div class="t" style="top:917.5px;height:56px;line-height:56px;font-size:28px;color:#262626;left:2970.8px;"><span style="letter-spacing:1.28px;margin-right:-1.28px">10240</span></div><div style="left:2853.2px;top:983.0px;width:218.8px;height:2.0px;background:#f0f0f0;"></div><div style="left:3152.0px;top:644.0px;width:663.8px;height:608.0px;background:#ffffff;"></div><div class="t" style="top:668.5px;height:56px;line-height:56px;font-size:28px;color:#1f1f1f;-webkit-text-stroke:0.9px;left:2983.9px;width:1000px;text-align:center;"><span style="letter-spacing:0.25px;margin-right:-0.25px">jvm_info</span></div><svg class="ic" style="left:3157.3px;top:732.0px;" width="36" height="32" viewBox="-18.0 -16.0 36 32"><path fill="none" stroke="#3946ab" stroke-width="2.4" stroke-linecap="butt" stroke-linejoin="miter" d="M9.6 -8.4A12.8 12.8 0 1 0 9.6 8.4"/><path fill="none" stroke="#3946ab" stroke-width="2.4" stroke-linecap="butt" stroke-linejoin="miter" d="M-1.6 -7.4V1.2L4 5.2M8 -2.6H16.6M8 1.8H12.4"/></svg><div class="t" style="top:727.0px;height:48px;line-height:48px;font-size:24px;color:#7a7a7a;font-style:italic;left:3200.5px;"><span>采集时间</span></div><div class="t" style="top:727.0px;height:48px;line-height:48px;font-size:24px;color:#7a7a7a;font-style:italic;left:3300.0px;"><span style="letter-spacing:3.18px;margin-right:-3.18px">:12:03:52</span></div><div style="left:3152.0px;top:781.0px;width:663.8px;height:2.0px;background:#f0f0f0;"></div><div style="left:3200.0px;top:828.5px;width:567.6px;height:77.5px;background:#fafafa;border-radius:4px 4px 0 0;"></div><div style="left:3200.0px;top:905.0px;width:567.6px;height:2.0px;background:#f0f0f0;"></div><div style="left:3329.4px;top:844.5px;width:2.0px;height:44.5px;background:#f0f0f0;"></div><div class="t" style="top:837.8px;height:56px;line-height:56px;font-size:28px;color:#1f1f1f;-webkit-text-stroke:0.9px;left:2765.0px;width:1000px;text-align:center;"><span class="m">名称</span></div><div class="t" style="top:837.8px;height:56px;line-height:56px;font-size:28px;color:#1f1f1f;-webkit-text-stroke:0.9px;left:3049.5px;width:1000px;text-align:center;"><span class="m">值</span></div><div class="t" style="top:917.5px;height:56px;line-height:56px;font-size:28px;color:#262626;left:3216.5px;"><span style="letter-spacing:0.61px;margin-right:-0.61px">runtime</span></div><div class="t" style="top:917.5px;height:56px;line-height:56px;font-size:28px;color:#262626;left:3349.2px;"><span style="letter-spacing:0.22px;margin-right:-0.22px">OpenJDK Runtime Environment</span></div><div style="left:3200.0px;top:983.0px;width:567.6px;height:2.0px;background:#f0f0f0;"></div><div class="t" style="top:995.5px;height:56px;line-height:56px;font-size:28px;color:#262626;left:3216.5px;"><span style="letter-spacing:0.64px;margin-right:-0.64px">vendor</span></div><div class="t" style="top:995.5px;height:56px;line-height:56px;font-size:28px;color:#262626;left:3349.2px;"><span style="letter-spacing:0.22px;margin-right:-0.22px">Azul Systems, Inc.</span></div><div style="left:3200.0px;top:1061.0px;width:567.6px;height:2.0px;background:#f0f0f0;"></div><div class="t" style="top:1073.5px;height:56px;line-height:56px;font-size:28px;color:#262626;left:3216.5px;"><span style="letter-spacing:0.22px;margin-right:-0.22px">version</span></div><div class="t" style="top:1073.5px;height:56px;line-height:56px;font-size:28px;color:#262626;left:3349.2px;"><span style="letter-spacing:1.18px;margin-right:-1.18px">11.0.13+8-LTS</span></div><div style="left:3200.0px;top:1139.0px;width:567.6px;height:2.0px;background:#f0f0f0;"></div><div style="left:1253.0px;top:1289.0px;width:476.5px;height:532.4px;background:#ffffff;"></div><div class="t" style="top:1313.5px;height:56px;line-height:56px;font-size:28px;color:#1f1f1f;-webkit-text-stroke:0.9px;left:991.2px;width:1000px;text-align:center;"><span style="letter-spacing:-0.13px;margin-right:0.13px">jvm_memory_bytes_used</span></div><svg class="ic" style="left:1258.3px;top:1377.0px;" width="36" height="32" viewBox="-18.0 -16.0 36 32"><path fill="none" stroke="#3946ab" stroke-width="2.4" stroke-linecap="butt" stroke-linejoin="miter" d="M9.6 -8.4A12.8 12.8 0 1 0 9.6 8.4"/><path fill="none" stroke="#3946ab" stroke-width="2.4" stroke-linecap="butt" stroke-linejoin="miter" d="M-1.6 -7.4V1.2L4 5.2M8 -2.6H16.6M8 1.8H12.4"/></svg><div class="t" style="top:1372.0px;height:48px;line-height:48px;font-size:24px;color:#7a7a7a;font-style:italic;left:1301.5px;"><span>采集时间</span></div><div class="t" style="top:1372.0px;height:48px;line-height:48px;font-size:24px;color:#7a7a7a;font-style:italic;left:1401.0px;"><span style="letter-spacing:3.18px;margin-right:-3.18px">:12:03:52</span></div><div style="left:1253.0px;top:1426.0px;width:476.5px;height:2.0px;background:#f0f0f0;"></div><div style="left:1301.4px;top:1473.5px;width:380.4px;height:77.5px;background:#fafafa;border-radius:4px 4px 0 0;"></div><div style="left:1301.4px;top:1550.0px;width:380.4px;height:2.0px;background:#f0f0f0;"></div><div style="left:1442.5px;top:1489.5px;width:2.0px;height:44.5px;background:#f0f0f0;"></div><div class="t" style="top:1484.2px;height:56px;line-height:56px;font-size:28px;color:#1f1f1f;-webkit-text-stroke:0.9px;left:873.0px;width:1000px;text-align:center;"><span style="letter-spacing:0.32px;margin-right:-0.32px">area</span></div><div class="t" style="top:1484.2px;height:56px;line-height:56px;font-size:28px;color:#1f1f1f;-webkit-text-stroke:0.9px;left:1063.0px;width:1000px;text-align:center;"><span style="letter-spacing:0.64px;margin-right:-0.64px">value</span></div><div class="t" style="top:1563.0px;height:56px;line-height:56px;font-size:28px;color:#262626;left:1317.9px;"><span style="letter-spacing:0.24px;margin-right:-0.24px">heap</span></div><div class="t" style="top:1563.0px;height:56px;line-height:56px;font-size:28px;color:#262626;left:1462.3px;"><span style="letter-spacing:1.30px;margin-right:-1.30px">218.251</span></div><div style="left:1581.0px;top:1568.7px;width:68.4px;height:43.8px;background:#f6ffed;border:2px solid #b7eb8f;border-radius:5px;"></div><div class="t" style="top:1567.5px;height:48px;line-height:48px;font-size:24px;color:#4fbf18;left:1115.2px;width:1000px;text-align:center;-webkit-text-stroke:0.35px;"><span style="letter-spacing:-0.50px;margin-right:0.50px">MB</span></div><div style="left:1301.4px;top:1629.0px;width:380.4px;height:2.0px;background:#f0f0f0;"></div><div class="t" style="top:1642.0px;height:56px;line-height:56px;font-size:28px;color:#262626;left:1317.9px;"><span style="letter-spacing:0.28px;margin-right:-0.28px">nonheap</span></div><div class="t" style="top:1642.0px;height:56px;line-height:56px;font-size:28px;color:#262626;left:1462.3px;"><span style="letter-spacing:1.30px;margin-right:-1.30px">70.7422</span></div><div style="left:1581.0px;top:1647.7px;width:68.4px;height:43.8px;background:#f6ffed;border:2px solid #b7eb8f;border-radius:5px;"></div><div class="t" style="top:1646.5px;height:48px;line-height:48px;font-size:24px;color:#4fbf18;left:1115.2px;width:1000px;text-align:center;-webkit-text-stroke:0.35px;"><span style="letter-spacing:-0.50px;margin-right:0.50px">MB</span></div><div style="left:1301.4px;top:1708.0px;width:380.4px;height:2.0px;background:#f0f0f0;"></div><div style="left:1762.0px;top:1289.0px;width:821.0px;height:811.0px;background:#ffffff;"></div><div class="t" style="top:1313.5px;height:56px;line-height:56px;font-size:28px;color:#1f1f1f;-webkit-text-stroke:0.9px;left:1672.5px;width:1000px;text-align:center;"><span style="letter-spacing:-0.06px;margin-right:0.06px">jvm_memory_pool_bytes_used</span></div><svg class="ic" style="left:1767.3px;top:1377.0px;" width="36" height="32" viewBox="-18.0 -16.0 36 32"><path fill="none" stroke="#3946ab" stroke-width="2.4" stroke-linecap="butt" stroke-linejoin="miter" d="M9.6 -8.4A12.8 12.8 0 1 0 9.6 8.4"/><path fill="none" stroke="#3946ab" stroke-width="2.4" stroke-linecap="butt" stroke-linejoin="miter" d="M-1.6 -7.4V1.2L4 5.2M8 -2.6H16.6M8 1.8H12.4"/></svg><div class="t" style="top:1372.0px;height:48px;line-height:48px;font-size:24px;color:#7a7a7a;font-style:italic;left:1810.5px;"><span>采集时间</span></div><div class="t" style="top:1372.0px;height:48px;line-height:48px;font-size:24px;color:#7a7a7a;font-style:italic;left:1910.0px;"><span style="letter-spacing:3.18px;margin-right:-3.18px">:12:03:52</span></div><div style="left:1762.0px;top:1426.0px;width:821.0px;height:2.0px;background:#f0f0f0;"></div><div style="left:1810.0px;top:1473.5px;width:724.6px;height:77.5px;background:#fafafa;border-radius:4px 4px 0 0;"></div><div style="left:1810.0px;top:1550.0px;width:724.6px;height:2.0px;background:#f0f0f0;"></div><div style="left:2297.0px;top:1489.5px;width:2.0px;height:44.5px;background:#f0f0f0;"></div><div class="t" style="top:1484.2px;height:56px;line-height:56px;font-size:28px;color:#1f1f1f;-webkit-text-stroke:0.9px;left:1554.0px;width:1000px;text-align:center;"><span style="letter-spacing:1.35px;margin-right:-1.35px">pool</span></div><div class="t" style="top:1484.2px;height:56px;line-height:56px;font-size:28px;color:#1f1f1f;-webkit-text-stroke:0.9px;left:1916.4px;width:1000px;text-align:center;"><span style="letter-spacing:0.64px;margin-right:-0.64px">value</span></div><div class="t" style="top:1563.0px;height:56px;line-height:56px;font-size:28px;color:#262626;left:1826.5px;"><span style="letter-spacing:0.84px;margin-right:-0.84px">CodeHeap 'non-nmethods'</span></div><div class="t" style="top:1563.0px;height:56px;line-height:56px;font-size:28px;color:#262626;left:2316.8px;"><span style="letter-spacing:1.17px;margin-right:-1.17px">1.2362</span></div><div style="left:2418.0px;top:1568.7px;width:68.4px;height:43.8px;background:#f6ffed;border:2px solid #b7eb8f;border-radius:5px;"></div><div class="t" style="top:1567.5px;height:48px;line-height:48px;font-size:24px;color:#4fbf18;left:1952.2px;width:1000px;text-align:center;-webkit-text-stroke:0.35px;"><span style="letter-spacing:-0.50px;margin-right:0.50px">MB</span></div><div style="left:1810.0px;top:1629.0px;width:724.6px;height:2.0px;background:#f0f0f0;"></div><div class="t" style="top:1642.0px;height:56px;line-height:56px;font-size:28px;color:#262626;left:1826.5px;"><span style="letter-spacing:0.50px;margin-right:-0.50px">Metaspace</span></div><div class="t" style="top:1642.0px;height:56px;line-height:56px;font-size:28px;color:#262626;left:2316.8px;"><span style="letter-spacing:1.30px;margin-right:-1.30px">51.7887</span></div><div style="left:2435.5px;top:1647.7px;width:68.4px;height:43.8px;background:#f6ffed;border:2px solid #b7eb8f;border-radius:5px;"></div><div class="t" style="top:1646.5px;height:48px;line-height:48px;font-size:24px;color:#4fbf18;left:1969.7px;width:1000px;text-align:center;-webkit-text-stroke:0.35px;"><span style="letter-spacing:-0.50px;margin-right:0.50px">MB</span></div><div style="left:1810.0px;top:1708.0px;width:724.6px;height:2.0px;background:#f0f0f0;"></div><div class="t" style="top:1721.0px;height:56px;line-height:56px;font-size:28px;color:#262626;left:1826.5px;"><span style="letter-spacing:0.20px;margin-right:-0.20px">Compressed Class Space</span></div><div class="t" style="top:1721.0px;height:56px;line-height:56px;font-size:28px;color:#262626;left:2316.8px;"><span style="letter-spacing:1.17px;margin-right:-1.17px">6.6624</span></div><div style="left:2418.0px;top:1726.7px;width:68.4px;height:43.8px;background:#f6ffed;border:2px solid #b7eb8f;border-radius:5px;"></div><div class="t" style="top:1725.5px;height:48px;line-height:48px;font-size:24px;color:#4fbf18;left:1952.2px;width:1000px;text-align:center;-webkit-text-stroke:0.35px;"><span style="letter-spacing:-0.50px;margin-right:0.50px">MB</span></div><div style="left:1810.0px;top:1787.0px;width:724.6px;height:2.0px;background:#f0f0f0;"></div><div class="t" style="top:1800.0px;height:56px;line-height:56px;font-size:28px;color:#262626;left:1826.5px;"><span style="letter-spacing:-0.06px;margin-right:0.06px">G1 Eden Space</span></div><div class="t" style="top:1800.0px;height:56px;line-height:56px;font-size:28px;color:#262626;left:2316.8px;"><span style="letter-spacing:1.14px;margin-right:-1.14px">175</span></div><div style="left:2375.5px;top:1805.7px;width:68.4px;height:43.8px;background:#f6ffed;border:2px solid #b7eb8f;border-radius:5px;"></div><div class="t" style="top:1804.5px;height:48px;line-height:48px;font-size:24px;color:#4fbf18;left:1909.7px;width:1000px;text-align:center;-webkit-text-stroke:0.35px;"><span style="letter-spacing:-0.50px;margin-right:0.50px">MB</span></div><div style="left:1810.0px;top:1866.0px;width:724.6px;height:2.0px;background:#f0f0f0;"></div><div class="t" style="top:1879.0px;height:56px;line-height:56px;font-size:28px;color:#262626;left:1826.5px;"><span style="letter-spacing:-0.10px;margin-right:0.10px">G1 Old Gen</span></div><div class="t" style="top:1879.0px;height:56px;line-height:56px;font-size:28px;color:#262626;left:2316.8px;"><span style="letter-spacing:1.17px;margin-right:-1.17px">28.251</span></div><div style="left:2418.0px;top:1884.7px;width:68.4px;height:43.8px;background:#f6ffed;border:2px solid #b7eb8f;border-radius:5px;"></div><div class="t" style="top:1883.5px;height:48px;line-height:48px;font-size:24px;color:#4fbf18;left:1952.2px;width:1000px;text-align:center;-webkit-text-stroke:0.35px;"><span style="letter-spacing:-0.50px;margin-right:0.50px">MB</span></div><div style="left:1810.0px;top:1945.0px;width:724.6px;height:2.0px;background:#f0f0f0;"></div><div class="t" style="top:1958.0px;height:56px;line-height:56px;font-size:28px;color:#262626;left:1826.5px;"><span style="letter-spacing:0.19px;margin-right:-0.19px">G1 Survivor Space</span></div><div class="t" style="top:1958.0px;height:56px;line-height:56px;font-size:28px;color:#262626;left:2316.8px;"><span style="letter-spacing:0.35px;margin-right:-0.35px">15</span></div><div style="left:2358.0px;top:1963.7px;width:68.4px;height:43.8px;background:#f6ffed;border:2px solid #b7eb8f;border-radius:5px;"></div><div class="t" style="top:1962.5px;height:48px;line-height:48px;font-size:24px;color:#4fbf18;left:1892.2px;width:1000px;text-align:center;-webkit-text-stroke:0.35px;"><span style="letter-spacing:-0.50px;margin-right:0.50px">MB</span></div><div style="left:1810.0px;top:2024.0px;width:724.6px;height:2.0px;background:#f0f0f0;"></div><div style="left:2614.7px;top:1289.0px;width:821.9px;height:811.0px;background:#ffffff;"></div><div class="t" style="top:1313.5px;height:56px;line-height:56px;font-size:28px;color:#1f1f1f;-webkit-text-stroke:0.9px;left:2525.6px;width:1000px;text-align:center;"><span style="letter-spacing:0.15px;margin-right:-0.15px">jvm_memory_pool_bytes_committed</span></div><svg class="ic" style="left:2620.0px;top:1377.0px;" width="36" height="32" viewBox="-18.0 -16.0 36 32"><path fill="none" stroke="#3946ab" stroke-width="2.4" stroke-linecap="butt" stroke-linejoin="miter" d="M9.6 -8.4A12.8 12.8 0 1 0 9.6 8.4"/><path fill="none" stroke="#3946ab" stroke-width="2.4" stroke-linecap="butt" stroke-linejoin="miter" d="M-1.6 -7.4V1.2L4 5.2M8 -2.6H16.6M8 1.8H12.4"/></svg><div class="t" style="top:1372.0px;height:48px;line-height:48px;font-size:24px;color:#7a7a7a;font-style:italic;left:2663.2px;"><span>采集时间</span></div><div class="t" style="top:1372.0px;height:48px;line-height:48px;font-size:24px;color:#7a7a7a;font-style:italic;left:2762.7px;"><span style="letter-spacing:3.18px;margin-right:-3.18px">:12:03:52</span></div><div style="left:2614.7px;top:1426.0px;width:821.9px;height:2.0px;background:#f0f0f0;"></div><div style="left:2663.0px;top:1473.5px;width:725.9px;height:77.5px;background:#fafafa;border-radius:4px 4px 0 0;"></div><div style="left:2663.0px;top:1550.0px;width:725.9px;height:2.0px;background:#f0f0f0;"></div><div style="left:3149.6px;top:1489.5px;width:2.0px;height:44.5px;background:#f0f0f0;"></div><div class="t" style="top:1484.2px;height:56px;line-height:56px;font-size:28px;color:#1f1f1f;-webkit-text-stroke:0.9px;left:2407.7px;width:1000px;text-align:center;"><span style="letter-spacing:1.35px;margin-right:-1.35px">pool</span></div><div class="t" style="top:1484.2px;height:56px;line-height:56px;font-size:28px;color:#1f1f1f;-webkit-text-stroke:0.9px;left:2770.6px;width:1000px;text-align:center;"><span style="letter-spacing:0.64px;margin-right:-0.64px">value</span></div><div class="t" style="top:1563.0px;height:56px;line-height:56px;font-size:28px;color:#262626;left:2679.5px;"><span style="letter-spacing:0.84px;margin-right:-0.84px">CodeHeap 'non-nmethods'</span></div><div class="t" style="top:1563.0px;height:56px;line-height:56px;font-size:28px;color:#262626;left:3169.4px;"><span style="letter-spacing:1.27px;margin-right:-1.27px">2.4375</span></div><div style="left:3271.1px;top:1568.7px;width:68.4px;height:43.8px;background:#f6ffed;border:2px solid #b7eb8f;border-radius:5px;"></div><div class="t" style="top:1567.5px;height:48px;line-height:48px;font-size:24px;color:#4fbf18;left:2805.3px;width:1000px;text-align:center;-webkit-text-stroke:0.35px;"><span style="letter-spacing:-0.50px;margin-right:0.50px">MB</span></div><div style="left:2663.0px;top:1629.0px;width:725.9px;height:2.0px;background:#f0f0f0;"></div><div class="t" style="top:1642.0px;height:56px;line-height:56px;font-size:28px;color:#262626;left:2679.5px;"><span style="letter-spacing:0.50px;margin-right:-0.50px">Metaspace</span></div><div class="t" style="top:1642.0px;height:56px;line-height:56px;font-size:28px;color:#262626;left:3169.4px;"><span style="letter-spacing:1.46px;margin-right:-1.46px">53.9219</span></div><div style="left:3289.1px;top:1647.7px;width:68.4px;height:43.8px;background:#f6ffed;border:2px solid #b7eb8f;border-radius:5px;"></div><div class="t" style="top:1646.5px;height:48px;line-height:48px;font-size:24px;color:#4fbf18;left:2823.3px;width:1000px;text-align:center;-webkit-text-stroke:0.35px;"><span style="letter-spacing:-0.50px;margin-right:0.50px">MB</span></div><div style="left:2663.0px;top:1708.0px;width:725.9px;height:2.0px;background:#f0f0f0;"></div><div class="t" style="top:1721.0px;height:56px;line-height:56px;font-size:28px;color:#262626;left:2679.5px;"><span style="letter-spacing:0.20px;margin-right:-0.20px">Compressed Class Space</span></div><div class="t" style="top:1721.0px;height:56px;line-height:56px;font-size:28px;color:#262626;left:3169.4px;"><span style="letter-spacing:0.54px;margin-right:-0.54px">7.5</span></div><div style="left:3219.1px;top:1726.7px;width:68.4px;height:43.8px;background:#f6ffed;border:2px solid #b7eb8f;border-radius:5px;"></div><div class="t" style="top:1725.5px;height:48px;line-height:48px;font-size:24px;color:#4fbf18;left:2753.3px;width:1000px;text-align:center;-webkit-text-stroke:0.35px;"><span style="letter-spacing:-0.50px;margin-right:0.50px">MB</span></div><div style="left:2663.0px;top:1787.0px;width:725.9px;height:2.0px;background:#f0f0f0;"></div><div class="t" style="top:1800.0px;height:56px;line-height:56px;font-size:28px;color:#262626;left:2679.5px;"><span style="letter-spacing:-0.06px;margin-right:0.06px">G1 Eden Space</span></div><div class="t" style="top:1800.0px;height:56px;line-height:56px;font-size:28px;color:#262626;left:3169.4px;"><span style="letter-spacing:1.64px;margin-right:-1.64px">219</span></div><div style="left:3229.1px;top:1805.7px;width:68.4px;height:43.8px;background:#f6ffed;border:2px solid #b7eb8f;border-radius:5px;"></div><div class="t" style="top:1804.5px;height:48px;line-height:48px;font-size:24px;color:#4fbf18;left:2763.3px;width:1000px;text-align:center;-webkit-text-stroke:0.35px;"><span style="letter-spacing:-0.50px;margin-right:0.50px">MB</span></div><div style="left:2663.0px;top:1866.0px;width:725.9px;height:2.0px;background:#f0f0f0;"></div><div class="t" style="top:1879.0px;height:56px;line-height:56px;font-size:28px;color:#262626;left:2679.5px;"><span style="letter-spacing:-0.10px;margin-right:0.10px">G1 Old Gen</span></div><div class="t" style="top:1879.0px;height:56px;line-height:56px;font-size:28px;color:#262626;left:3169.4px;"><span style="letter-spacing:1.64px;margin-right:-1.64px">136</span></div><div style="left:3229.1px;top:1884.7px;width:68.4px;height:43.8px;background:#f6ffed;border:2px solid #b7eb8f;border-radius:5px;"></div><div class="t" style="top:1883.5px;height:48px;line-height:48px;font-size:24px;color:#4fbf18;left:2763.3px;width:1000px;text-align:center;-webkit-text-stroke:0.35px;"><span style="letter-spacing:-0.50px;margin-right:0.50px">MB</span></div><div style="left:2663.0px;top:1945.0px;width:725.9px;height:2.0px;background:#f0f0f0;"></div><div class="t" style="top:1958.0px;height:56px;line-height:56px;font-size:28px;color:#262626;left:2679.5px;"><span style="letter-spacing:0.19px;margin-right:-0.19px">G1 Survivor Space</span></div><div class="t" style="top:1958.0px;height:56px;line-height:56px;font-size:28px;color:#262626;left:3169.4px;"><span style="letter-spacing:0.35px;margin-right:-0.35px">15</span></div><div style="left:3210.6px;top:1963.7px;width:68.4px;height:43.8px;background:#f6ffed;border:2px solid #b7eb8f;border-radius:5px;"></div><div class="t" style="top:1962.5px;height:48px;line-height:48px;font-size:24px;color:#4fbf18;left:2744.8px;width:1000px;text-align:center;-webkit-text-stroke:0.35px;"><span style="letter-spacing:-0.50px;margin-right:0.50px">MB</span></div><div style="left:2663.0px;top:2024.0px;width:725.9px;height:2.0px;background:#f0f0f0;"></div><div style="left:3844.0px;top:713.7px;width:94.0px;height:96.3px;background:#3946ab;border-radius:7px 0 0 7px;"></div><svg class="ic" style="left:3869.4px;top:739.6px;" width="45.199999999999996" height="45.199999999999996" viewBox="-22.599999999999998 -22.599999999999998 45.199999999999996 45.199999999999996"><g transform="scale(1.13)"><path fill="none" stroke="#fff" stroke-width="2.4" stroke-linecap="butt" stroke-linejoin="round" d="M-3.64 -15.78L3.64 -15.78L4.50 -11.13L7.39 -9.46L11.85 -11.05L15.49 -4.74L11.88 -1.67L11.88 1.67L15.49 4.74L11.85 11.05L7.39 9.46L4.50 11.13L3.64 15.78L-3.64 15.78L-4.50 11.13L-7.39 9.46L-11.85 11.05L-15.49 4.74L-11.88 1.67L-11.88 -1.67L-15.49 -4.74L-11.85 -11.05L-7.39 -9.46L-4.50 -11.13Z"/><circle r="6" fill="none" stroke="#fff" stroke-width="2.4" stroke-linecap="butt" stroke-linejoin="miter"/></g></svg><div style="left:3812.1px;top:1750.0px;width:64.0px;height:64.0px;background:#ffffff;border-radius:50%;box-shadow:0 8px 36px 4px rgba(0,0,0,.13);"></div><svg class="ic" style="left:3816.1px;top:1754.0px;" width="56" height="56" viewBox="-28.0 -28.0 56 56"><g transform="translate(1.2 -0.4) rotate(-45)"><rect x="-4.1" y="-22" width="8.2" height="44" rx="4.1" fill="none" stroke="#000" stroke-width="3.8" stroke-linecap="butt" stroke-linejoin="miter"/><path fill="none" stroke="#000" stroke-width="3.4" stroke-linecap="butt" stroke-linejoin="miter" d="M-4.1 -11H4.1"/></g><path fill="none" stroke="#000" stroke-width="3.8" stroke-linecap="round" stroke-linejoin="miter" d="M7.1 -21.3V-13.7M3.3 -17.5H10.9M-15.6 3V10.2M-19.2 6.6H-12"/><circle cx="15.4" cy="-4.1" r="3.1" fill="#000"/><circle cx="-4.3" cy="13.7" r="1.9" fill="#000"/></svg><div style="left:1201.0px;top:464.0px;width:418.6px;height:191.0px;border:19px solid #ff2600;border-radius:30px;"></div><div style="left:112.0px;top:338.0px;width:3826.0px;height:24.0px;background:linear-gradient(to bottom,rgba(0,0,0,.125),rgba(0,0,0,.06) 35%,rgba(0,0,0,.015) 75%,rgba(0,0,0,0));"></div><div style="left:560.0px;top:338.0px;width:3378.0px;height:2.0px;background:rgba(0,30,20,.04);"></div><div style="left:112.0px;top:233.5px;width:3826.0px;height:104.5px;background:#3946ab;"></div><svg class="ic" style="left:170.1px;top:248.8px;" width="72" height="68" viewBox="-36.0 -34.0 72 68"><g transform="scale(2.140875 2.0625)"><circle r="16" fill="#fff"/><path fill="#3946ab" d="M-10.2 -7.6 C-10.4 -9.2 -9.4 -10 -7.6 -10.1 C-3 -10.6 1 -10.6 5 -9.4 C9 -8 12 -5.6 12.8 -3.4 C13.1 -2.6 13 -1.6 12.7 -1.1 L11.9 -0.9 C10.6 -2.4 9 -3.5 7.4 -4.3 C4.6 -5.6 1.6 -6.2 -1 -6.1 C-2.6 -6 -3.8 -5.4 -4.4 -4.8 L-7.2 -3.8 Z"/><path fill="#3946ab" d="M-4.3 -1.9 L0.3 -1 L2.2 4 L-1.6 8.4 L-4.8 14.9 L-6.7 13.6 Z"/></g></svg><div class="t" style="top:253.2px;height:60px;line-height:60px;font-size:45px;color:#fff;font-weight:700;left:243.6px;"><span style="letter-spacing:-0.45px;margin-right:0.45px">HertzBeat</span></div><svg class="ic" style="left:546.3px;top:272.4px;" width="30" height="28" viewBox="-15.0 -14.0 30 28"><path fill="none" stroke="#fff" stroke-width="2.3" stroke-linecap="butt" stroke-linejoin="miter" d="M-12 -10.2H13M-2 -3.4H13M-2 3.1H13M-12 9.8H13"/><path fill="#fff" d="M-12.5 0L-6 -5.2V5.2Z"/></svg><svg class="ic" style="left:643.9px;top:268.1px" width="36" height="36" viewBox="0 0 16 16"><path fill="#fff" d="M8 0C3.58 0 0 3.58 0 8c0 3.54 2.29 6.53 5.47 7.59.4.07.55-.17.55-.38 0-.19-.01-.82-.01-1.49-2.01.37-2.53-.49-2.69-.94-.09-.23-.48-.94-.82-1.13-.28-.15-.68-.52-.01-.53.63-.01 1.08.58 1.23.82.72 1.21 1.87.87 2.33.66.07-.52.28-.87.51-1.07-1.78-.2-3.64-.89-3.64-3.95 0-.87.31-1.59.82-2.15-.08-.2-.36-1.02.08-2.12 0 0 .67-.21 2.2.82.64-.18 1.32-.27 2-.27.68 0 1.36.09 2 .27 1.53-1.04 2.2-.82 2.2-.82.44 1.1.16 1.92.08 2.12.51.56.82 1.27.82 2.15 0 3.07-1.87 3.75-3.65 3.95.29.25.54.73.54 1.48 0 1.07-.01 1.93-.01 2.2 0 .21.15.46.55.38A8.013 8.013 0 0016 8c0-4.42-3.58-8-8-8z"/></svg><svg class="ic" style="left:743.9px;top:268.1px;" width="36" height="36" viewBox="-18.0 -18.0 36 36"><circle r="18" fill="#fff"/><path fill="#3946ab" d="M-8.8 -6.2C-8.8 -8.3 -7.2 -9.9 -5.1 -9.9H9.2C9.7 -9.9 10 -9.6 10 -9.1V-6.6C10 -6.1 9.7 -5.8 9.2 -5.8H-3.2C-4.1 -5.8 -4.7 -5.2 -4.7 -4.3V4.2C-4.7 4.7 -4.4 5 -3.9 5H4.4C5.3 5 5.9 4.4 5.9 3.5V2.7H-0.8C-1.3 2.7 -1.6 2.4 -1.6 1.9V-0.6C-1.6 -1.1 -1.3 -1.4 -0.8 -1.4H9.2C9.7 -1.4 10 -1.1 10 -0.6V5.4C10 7.5 8.4 9.1 6.3 9.1H-8C-8.5 9.1 -8.8 8.8 -8.8 8.3Z"/></svg><div style="left:860.0px;top:256.2px;width:2576.0px;height:59.6px;background:#606bbc;border-radius:4px;"></div><svg class="ic" style="left:880.0px;top:271.5px;" width="30.0" height="30.0" viewBox="-15.0 -15.0 30.0 30.0"><g transform="scale(1.0)"><circle cx="-2.5" cy="-2.5" r="8.2" fill="none" stroke="#fff" stroke-width="2.5" stroke-linecap="butt" stroke-linejoin="miter"/><path fill="none" stroke="#fff" stroke-width="2.8" stroke-linecap="round" stroke-linejoin="miter" d="M4 4L11 11"/></g></svg><div class="t" style="top:257.5px;height:56px;line-height:56px;font-size:28px;color:#fff;left:918.5px;"><span class="m" style="letter-spacing:-0.31px">搜索监控：名称、</span><span style="letter-spacing:-0.88px">IP</span><span class="m">等</span></div><svg class="ic" style="left:3516.8px;top:269.0px;" width="34" height="38" viewBox="-17.0 -19.0 34 38"><path fill="none" stroke="#fff" stroke-width="3" stroke-linecap="butt" stroke-linejoin="round" d="M-9 10V-4C-9 -10 -5 -13 0 -13C5 -13 9 -10 9 -4V10M-13.5 10.5H13.5"/><path fill="none" stroke="#fff" stroke-width="2.8" stroke-linecap="butt" stroke-linejoin="miter" d="M-3.6 13A3.6 3.6 0 0 0 3.6 13"/></svg><div style="left:3509.7px;top:244.3px;width:77.0px;height:39.2px;background:#ff4d4f;border-radius:20px;"></div><div class="t" style="top:244.8px;height:40px;line-height:40px;font-size:24px;color:#fff;-webkit-text-stroke:0.9px;left:3048.2px;width:1000px;text-align:center;"><span style="letter-spacing:1.64px;margin-right:-1.64px">99+</span></div><svg class="ic" style="left:3616.6px;top:268.0px;" width="34" height="36" viewBox="-17.0 -18.0 34 36"><rect x="-12.8" y="-2.2" width="25.6" height="16.4" rx="1.5" fill="none" stroke="#fff" stroke-width="3" stroke-linecap="butt" stroke-linejoin="miter"/><path fill="none" stroke="#fff" stroke-width="3" stroke-linecap="butt" stroke-linejoin="miter" d="M-7.8 -2.2V-9C-7.8 -12.8 -5.6 -14.6 -2 -14.6H2C5.6 -14.6 7.8 -12.8 7.8 -9V-2.2"/><circle cy="4.5" r="2.2" fill="#fff"/><rect x="-1.1" y="5" width="2.2" height="5" fill="#fff"/></svg><svg class="ic" style="left:3713.2px;top:265.2px;" width="41.2" height="41.2" viewBox="-20.6 -20.6 41.2 41.2"><g transform="scale(1.03)"><path fill="none" stroke="#fff" stroke-width="2.9" stroke-linecap="butt" stroke-linejoin="round" d="M-3.64 -15.78L3.64 -15.78L4.50 -11.13L7.39 -9.46L11.85 -11.05L15.49 -4.74L11.88 -1.67L11.88 1.67L15.49 4.74L11.85 11.05L7.39 9.46L4.50 11.13L3.64 15.78L-3.64 15.78L-4.50 11.13L-7.39 9.46L-11.85 11.05L-15.49 4.74L-11.88 1.67L-11.88 -1.67L-15.49 -4.74L-11.85 -11.05L-7.39 -9.46L-4.50 -11.13Z"/><circle r="6" fill="none" stroke="#fff" stroke-width="2.9" stroke-linecap="butt" stroke-linejoin="miter"/></g></svg><svg class="ic" style="left:3796.5px;top:266.8px;" width="42" height="38" viewBox="-21.0 -19.0 42 38"><path fill="none" stroke="#fff" stroke-width="3" stroke-linecap="butt" stroke-linejoin="miter" d="M13.4 -8.8A16 16 0 1 0 13.4 8.8"/><path fill="none" stroke="#fff" stroke-width="3" stroke-linecap="butt" stroke-linejoin="miter" d="M0 0H14"/><path fill="#fff" d="M18.8 0L12 -5.4V5.4Z"/></svg><div class="t" style="top:257.8px;height:56px;line-height:56px;font-size:28px;color:#fff;left:3852.5px;"><span class="m">退出</span></div></div></body></html>
